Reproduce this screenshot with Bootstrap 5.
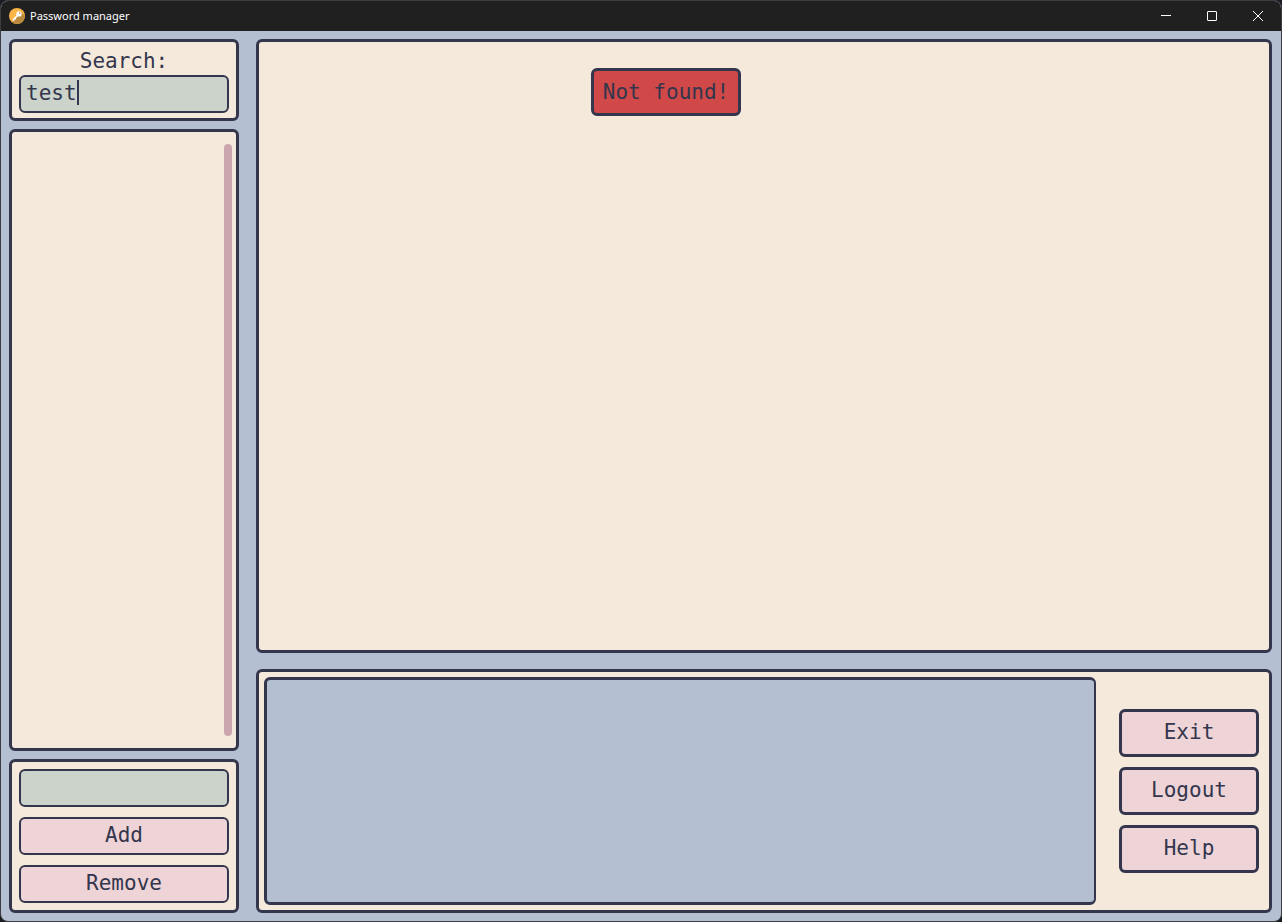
<!DOCTYPE html>
<html lang="en">
<head>
<meta charset="utf-8">
<meta name="viewport" content="width=device-width, initial-scale=1">
<title>Password manager</title>
<link href="https://cdn.jsdelivr.net/npm/bootstrap@5.3.0/dist/css/bootstrap.min.css" rel="stylesheet">
<style>
:root{--ink:#33364c;--cream:#f5e9dc;--slate:#b4c0d1;--sage:#cbd3ca;--pink:#eed3d7;--rose:#cba6af;--danger:#d04848}
body{background:#1a1c22;color:var(--ink);font:21px/30px "DejaVu Sans Mono",monospace}
.app-window{background:var(--slate);border:1px solid #3c3d42;border-radius:8px}
.title-bar{height:30px;background:#202020;color:#fff;font:11px/16px "Noto Sans","Open Sans",sans-serif;padding-left:8px;gap:5px}
.win-btn{width:46px;height:30px;border:0;padding:0;background:none;color:#fff}
.win-btn svg{display:block;margin:auto}
.workspace{padding:8px 9px 8px 8px;gap:17px}
.sidebar{width:230px;gap:8px}
.content{gap:16px}
.pane{background:var(--cream);border:3px solid var(--ink);border-radius:6px}
.pane-search{padding:0 7px 5px}
.pane-search label{height:33px;line-height:39px}
.field{height:38px;padding:0 5px 3px;background:var(--sage)!important;border:2px solid var(--ink)!important;border-radius:6px;color:var(--ink)!important;font:inherit;box-shadow:none!important}
.caret{left:7px;top:5px;height:25px;border-right:2px solid var(--ink);pointer-events:none}
.pane-list{padding:12px 4px}
.scroll-thumb{width:8px;border-radius:4px;background:var(--rose)}
.pane-edit{padding:7px;gap:10px}
.action{height:38px;padding:0 0 3px;background:var(--pink);border:2px solid var(--ink);border-radius:6px;color:var(--ink);font:inherit}
.action:hover{background:var(--rose);border-color:var(--ink)}
.action-lg{height:48px;width:140px;border-width:3px}
.notice{width:150px;height:48px;margin:26px 0 0 332px;background:var(--danger);border:3px solid var(--ink);border-radius:6px}
.pane-bottom{height:244px;padding:5px 10px 5px 5px;gap:23px}
.log-box{background:var(--slate);border:3px solid var(--ink);border-right-width:2px;border-radius:6px}
.menu{gap:10px}
</style>
</head>
<body>
<div class="app-window vh-100 d-flex flex-column overflow-hidden">
  <header class="title-bar d-flex align-items-center">
    <svg width="16" height="16" viewBox="0 0 16 16" aria-hidden="true">
      <circle cx="8" cy="8" r="8" fill="#fab447"/>
      <path d="M12.3 4.2 15.8 8A8 8 0 0 1 4.2 15L3.6 12.4Z" fill="#b98a3d"/>
      <path d="M8.6 7.4 4 12M4.2 11.8l1 1M5.8 10.2l1.1 1.1" stroke="#fff" stroke-width="1.5" fill="none"/>
      <circle cx="10" cy="5.9" r="2.7" fill="#fff"/>
      <circle cx="10.8" cy="5.1" r=".8" fill="#b98a3d"/>
    </svg>
    <span>Password manager</span>
    <div class="ms-auto d-flex">
      <button class="win-btn" type="button" aria-label="Minimize"><svg width="10" height="10" viewBox="0 0 10 10"><path d="M0 4.5h10" stroke="currentColor"/></svg></button>
      <button class="win-btn" type="button" aria-label="Maximize"><svg width="10" height="10" viewBox="0 0 10 10"><rect x=".5" y=".5" width="9" height="9" rx=".5" fill="none" stroke="currentColor"/></svg></button>
      <button class="win-btn" type="button" aria-label="Close"><svg width="10" height="10" viewBox="0 0 10 10"><path d="M0 0l10 10M10 0L0 10" stroke="currentColor"/></svg></button>
    </div>
  </header>
  <main class="workspace d-flex flex-grow-1">
    <aside class="sidebar d-flex flex-column flex-shrink-0">
      <section class="pane pane-search d-flex flex-column">
        <label class="text-center" for="search">Search:</label>
        <div class="position-relative">
          <input class="form-control field" id="search" type="text" value="test" autocomplete="off">
          <span class="caret position-absolute" aria-hidden="true"><span class="d-inline-block" style="width:4ch"></span></span>
        </div>
      </section>
      <section class="pane pane-list flex-grow-1 d-flex justify-content-end" aria-label="Entries">
        <div class="scroll-thumb"></div>
      </section>
      <section class="pane pane-edit d-flex flex-column">
        <input class="form-control field" type="text" aria-label="Entry name">
        <button class="btn action" type="button">Add</button>
        <button class="btn action" type="button">Remove</button>
      </section>
    </aside>
    <div class="content d-flex flex-column flex-grow-1">
      <section class="pane flex-grow-1">
        <div class="notice d-flex align-items-center justify-content-center text-nowrap" role="alert">Not found!</div>
      </section>
      <section class="pane pane-bottom d-flex">
        <div class="log-box flex-grow-1"></div>
        <nav class="menu d-flex flex-column justify-content-center" aria-label="Session">
          <button class="btn action action-lg" type="button">Exit</button>
          <button class="btn action action-lg" type="button">Logout</button>
          <button class="btn action action-lg" type="button">Help</button>
        </nav>
      </section>
    </div>
  </main>
</div>
<script src="https://cdn.jsdelivr.net/npm/bootstrap@5.3.0/dist/js/bootstrap.bundle.min.js"></script>
</body>
</html>
